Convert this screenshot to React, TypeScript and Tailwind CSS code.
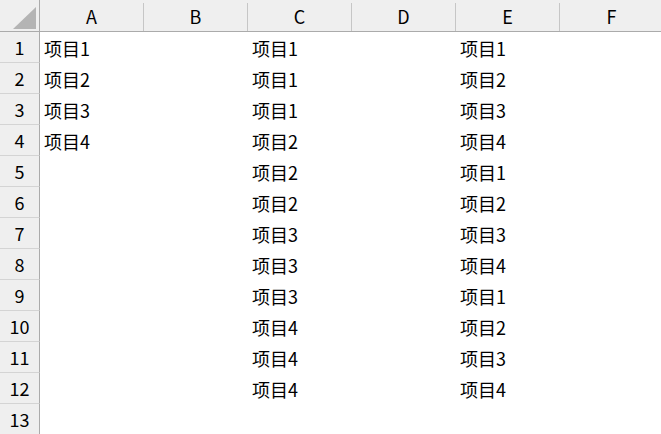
const cols = ['A', 'B', 'C', 'D', 'E', 'F'];

const data: Record<string, string[]> = {
  A: ['项目1', '项目2', '项目3', '项目4'],
  C: ['项目1', '项目1', '项目1', '项目2', '项目2', '项目2', '项目3', '项目3', '项目3', '项目4', '项目4', '项目4'],
  E: ['项目1', '项目2', '项目3', '项目4', '项目1', '项目2', '项目3', '项目4', '项目1', '项目2', '项目3', '项目4'],
};

const rows = Array.from({ length: 13 }, (_, i) => i + 1);

export default function App() {
  return (
    <div
      className="w-[661px] h-[434px] overflow-hidden bg-white text-[18px] text-black"
      style={{ fontFamily: '"Noto Sans CJK SC", "Noto Sans", sans-serif' }}
    >
      {/* column header */}
      <div className="flex h-8 bg-[#efefef] border-b border-[#ababab]">
        <div className="w-10 shrink-0 border-r border-[#ababab] flex">
          <svg width="39" height="31" viewBox="0 0 39 31">
            <polygon points="13,29 36,29 36,7" fill="#b4b4b4" />
          </svg>
        </div>
        {cols.map((c) => (
          <div key={c} className="w-[104px] shrink-0 flex">
            <div className="flex-1 flex items-center justify-center leading-none">{c}</div>
            <div className="w-px mt-[3px] bg-[#c6c6c6]" />
          </div>
        ))}
      </div>

      {rows.map((r) => (
        <div key={r} className="flex h-[31px]">
          <div className="w-10 shrink-0 bg-[#efefef] border-r border-b border-r-[#ababab] border-b-[#d4d4d4] flex items-center justify-center leading-none">
            {r}
          </div>
          {cols.map((c) => (
            <div key={c} className="w-[104px] shrink-0 flex items-center pl-1 leading-none whitespace-nowrap">
              {data[c]?.[r - 1] ?? ''}
            </div>
          ))}
        </div>
      ))}
    </div>
  );
}
